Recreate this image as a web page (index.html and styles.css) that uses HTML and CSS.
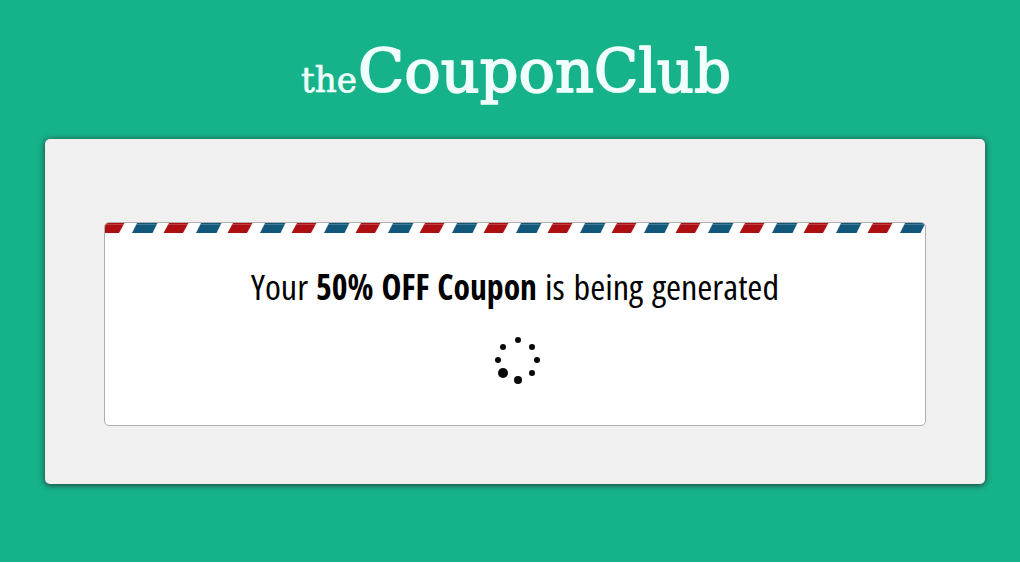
FILE: index.html
```
<!DOCTYPE html>
<html lang="en">
<head>
  <meta charset="UTF-8">
  <title>theCouponClub</title>
  <link rel="stylesheet" href="styles.css">
</head>
<body>
  <div class="page">
    <svg class="logo" width="460" height="80" viewBox="0 0 460 80">
      <text class="logo-small" x="16" y="56" textLength="56" lengthAdjust="spacingAndGlyphs">the</text>
      <text class="logo-big" x="73" y="56" textLength="236" lengthAdjust="spacingAndGlyphs">Coupon</text>
      <text class="logo-big" x="309" y="56" textLength="137" lengthAdjust="spacingAndGlyphs">Club</text>
    </svg>
    <div class="panel">
      <div class="coupon">
        <svg class="stripes" width="820" height="10">
          <defs>
            <pattern id="airmail" width="64" height="10" patternUnits="userSpaceOnUse">
              <path class="red" d="M0 0H19.5L14 10H-5.5Z M64 0H83.5L78 10H58.5Z"/>
              <path class="blue" d="M32 0H52.5L47.5 10H27Z"/>
            </pattern>
          </defs>
          <rect width="820" height="10" fill="url(#airmail)"/>
          <rect class="shine" y="1" width="820" height="1"/>
        </svg>
        <svg class="message" width="560" height="56" viewBox="0 0 560 56">
          <text x="16" y="36" textLength="57" lengthAdjust="spacingAndGlyphs">Your</text>
          <text class="strong" x="81" y="36" textLength="221" lengthAdjust="spacingAndGlyphs">50% OFF Coupon</text>
          <text x="310" y="36" textLength="234" lengthAdjust="spacingAndGlyphs">is being generated</text>
        </svg>
        <svg class="loader" width="50" height="54" viewBox="0 0 50 54">
          <circle cx="25" cy="7" r="3"/>
          <circle cx="39" cy="14" r="3"/>
          <circle cx="44" cy="27" r="3"/>
          <circle cx="39" cy="40" r="3"/>
          <circle cx="25" cy="47" r="4"/>
          <circle cx="10" cy="40" r="5"/>
          <circle cx="5" cy="27" r="3"/>
          <circle cx="10" cy="14" r="3"/>
        </svg>
      </div>
    </div>
  </div>
</body>
</html>
```
FILE: styles.css
```
body { margin: 0; background: #fff; font-family: "Open Sans", sans-serif; }
.page { box-sizing: border-box; height: 562px; padding: 36px 35px 0 45px; background: #16b38a; display: flex; flex-direction: column; align-items: center; overflow: hidden; }
.logo { display: block; flex: none; margin-bottom: 23px; overflow: visible; fill: #f0fffc; stroke: #f0fffc; stroke-linejoin: round; font-family: "DejaVu Serif", serif; }
.logo-small { font-size: 36px; stroke-width: .7px; }
.logo-big { font-size: 60px; stroke-width: 1.7px; }
.panel { box-sizing: border-box; flex: none; width: 940px; height: 345px; padding: 83px 59px 0; background: #f0f0f0; border-radius: 5px; box-shadow: 0 1px 6px rgba(40, 40, 40, .9); }
.coupon { box-sizing: border-box; height: 204px; background: #fff; border: 1px solid #b0b0b0; border-radius: 5px; display: flex; flex-direction: column; align-items: center; overflow: hidden; }
.stripes { display: block; flex: none; }
.red { fill: #ae0f12; }
.blue { fill: #12587d; }
.shine { fill: rgba(255, 255, 255, .2); }
.message { display: block; flex: none; margin-top: 31px; overflow: visible; font-size: 35px; font-stretch: 75%; word-spacing: 2px; fill: #000; }
.strong { font-weight: 700; }
.loader { display: block; flex: none; margin: 13px 0 0 5px; fill: #080808; }
```
